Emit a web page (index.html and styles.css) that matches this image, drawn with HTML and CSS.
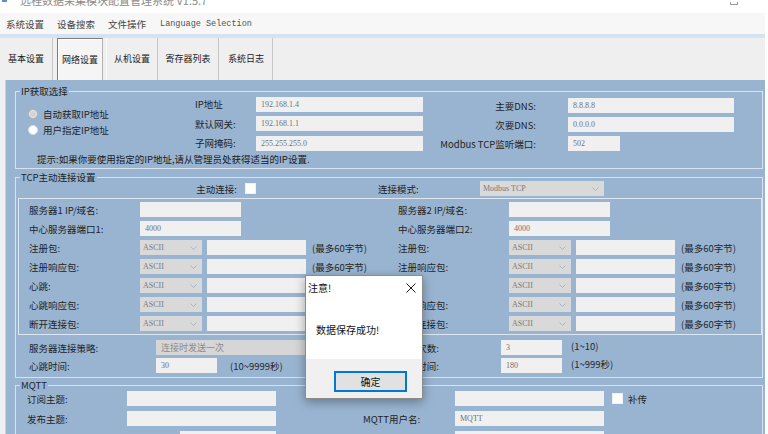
FILE: index.html
```html
<!DOCTYPE html>
<html lang="zh-CN">
<head>
<meta charset="utf-8">
<title>网络设置</title>
<link rel="stylesheet" href="styles.css">
</head>
<body>
<div class="window">
  <div class="titlebar">
    <span class="app-icon"></span>
    <span class="title">远程数据采集模块配置管理系统 V1.5.7</span>
    <span class="win-min"></span>
  </div>
  <div class="menubar">
    <span class="menu-item">系统设置</span>
    <span class="menu-item">设备搜索</span>
    <span class="menu-item">文件操作</span>
    <span class="menu-item mono">Language Selection</span>
  </div>
  <div class="tabstrip">
    <div class="tab t1">基本设置</div>
    <div class="tab t2 active">网络设置</div>
    <div class="tab t3">从机设置</div>
    <div class="tab t4">寄存器列表</div>
    <div class="tab t5">系统日志</div>
  </div>
  <div class="client">
    <div class="panel">
      <fieldset class="group ip-group">
        <legend>IP获取选择</legend>
        <div class="ip-row">
          <div class="radios">
            <div class="radio"><span class="dot on"></span>自动获取IP地址</div>
            <div class="radio"><span class="dot"></span>用户指定IP地址</div>
          </div>
          <div class="ip-fields">
            <span class="lbl">IP地址</span><input class="tb w167" readonly value="192.168.1.4">
            <span class="lbl">默认网关:</span><input class="tb w167" readonly value="192.168.1.1">
            <span class="lbl">子网掩码:</span><input class="tb w167" readonly value="255.255.255.0">
          </div>
          <div class="dns-fields">
            <span class="lbl r">主要DNS:</span><input class="tb w166" readonly value="8.8.8.8">
            <span class="lbl r">次要DNS:</span><input class="tb w166" readonly value="0.0.0.0">
            <span class="lbl r">Modbus TCP监听端口:</span><input class="tb w52" readonly value="502">
          </div>
        </div>
        <p class="hint">提示:如果你要使用指定的IP地址,请从管理员处获得适当的IP设置.</p>
      </fieldset>

      <fieldset class="group tcp-group">
        <legend>TCP主动连接设置</legend>
        <div class="conn-row">
          <span class="conn-lbl">主动连接:</span>
          <span class="check"></span>
          <span class="mode-lbl">连接模式:</span>
          <div class="combo w124"><span>Modbus TCP</span><svg width="7" height="4" viewBox="0 0 7 4"><polyline points="0.5,0.5 3.5,3.5 6.5,0.5" fill="none" stroke="#a9b6c6" stroke-width="1"/></svg></div>
        </div>
        <div class="inner">
          <span class="lbl">服务器1 IP/域名:</span>
          <div class="cell"><input class="tb w101" readonly value=""></div>
          <span class="lbl">服务器2 IP/域名:</span>
          <div class="cell"><input class="tb w101" readonly value=""></div>

          <span class="lbl">中心服务器端口1:</span>
          <div class="cell"><input class="tb w101" readonly value="4000"></div>
          <span class="lbl">中心服务器端口2:</span>
          <div class="cell"><input class="tb w101" readonly value="4000"></div>

          <span class="lbl">注册包:</span>
          <div class="cell"><div class="combo w62"><span>ASCII</span><svg width="7" height="4" viewBox="0 0 7 4"><polyline points="0.5,0.5 3.5,3.5 6.5,0.5" fill="none" stroke="#a9b6c6"/></svg></div><input class="tb w99" readonly value=""><span class="note">(最多60字节)</span></div>
          <span class="lbl">注册包:</span>
          <div class="cell"><div class="combo w62"><span>ASCII</span><svg width="7" height="4" viewBox="0 0 7 4"><polyline points="0.5,0.5 3.5,3.5 6.5,0.5" fill="none" stroke="#a9b6c6"/></svg></div><input class="tb w99" readonly value=""><span class="note">(最多60字节)</span></div>

          <span class="lbl">注册响应包:</span>
          <div class="cell"><div class="combo w62"><span>ASCII</span><svg width="7" height="4" viewBox="0 0 7 4"><polyline points="0.5,0.5 3.5,3.5 6.5,0.5" fill="none" stroke="#a9b6c6"/></svg></div><input class="tb w99" readonly value=""><span class="note">(最多60字节)</span></div>
          <span class="lbl">注册响应包:</span>
          <div class="cell"><div class="combo w62"><span>ASCII</span><svg width="7" height="4" viewBox="0 0 7 4"><polyline points="0.5,0.5 3.5,3.5 6.5,0.5" fill="none" stroke="#a9b6c6"/></svg></div><input class="tb w99" readonly value=""><span class="note">(最多60字节)</span></div>

          <span class="lbl">心跳:</span>
          <div class="cell"><div class="combo w62"><span>ASCII</span><svg width="7" height="4" viewBox="0 0 7 4"><polyline points="0.5,0.5 3.5,3.5 6.5,0.5" fill="none" stroke="#a9b6c6"/></svg></div><input class="tb w99" readonly value=""><span class="note">(最多60字节)</span></div>
          <span class="lbl">心跳:</span>
          <div class="cell"><div class="combo w62"><span>ASCII</span><svg width="7" height="4" viewBox="0 0 7 4"><polyline points="0.5,0.5 3.5,3.5 6.5,0.5" fill="none" stroke="#a9b6c6"/></svg></div><input class="tb w99" readonly value=""><span class="note">(最多60字节)</span></div>

          <span class="lbl">心跳响应包:</span>
          <div class="cell"><div class="combo w62"><span>ASCII</span><svg width="7" height="4" viewBox="0 0 7 4"><polyline points="0.5,0.5 3.5,3.5 6.5,0.5" fill="none" stroke="#a9b6c6"/></svg></div><input class="tb w99" readonly value=""><span class="note">(最多60字节)</span></div>
          <span class="lbl">心跳响应包:</span>
          <div class="cell"><div class="combo w62"><span>ASCII</span><svg width="7" height="4" viewBox="0 0 7 4"><polyline points="0.5,0.5 3.5,3.5 6.5,0.5" fill="none" stroke="#a9b6c6"/></svg></div><input class="tb w99" readonly value=""><span class="note">(最多60字节)</span></div>

          <span class="lbl">断开连接包:</span>
          <div class="cell"><div class="combo w62"><span>ASCII</span><svg width="7" height="4" viewBox="0 0 7 4"><polyline points="0.5,0.5 3.5,3.5 6.5,0.5" fill="none" stroke="#a9b6c6"/></svg></div><input class="tb w99" readonly value=""><span class="note">(最多60字节)</span></div>
          <span class="lbl">断开连接包:</span>
          <div class="cell"><div class="combo w62"><span>ASCII</span><svg width="7" height="4" viewBox="0 0 7 4"><polyline points="0.5,0.5 3.5,3.5 6.5,0.5" fill="none" stroke="#a9b6c6"/></svg></div><input class="tb w99" readonly value=""><span class="note">(最多60字节)</span></div>
        </div>
        <div class="policy">
          <span class="lbl">服务器连接策略:</span>
          <div class="cell"><div class="combo w175 cn"><span>连接时发送一次</span></div></div>
          <span class="lbl r2">重连次数:</span>
          <input class="tb w61" readonly value="3">
          <span class="note n2">(1~10)</span>

          <span class="lbl">心跳时间:</span>
          <div class="cell"><input class="tb w61" readonly value="30"><span class="note n3">(10~9999秒)</span></div>
          <span class="lbl r2">重连时间:</span>
          <input class="tb w61" readonly value="180">
          <span class="note n2">(1~999秒)</span>
        </div>
      </fieldset>

      <fieldset class="group mqtt-group">
        <legend>MQTT</legend>
        <div class="mqtt">
          <span class="lbl">订阅主题:</span>
          <input class="tb w149" readonly value="">
          <span class="lbl rl"></span>
          <input class="tb w149" readonly value="">
          <div class="cell"><span class="check"></span><span class="chk-lbl">补传</span></div>

          <span class="lbl">发布主题:</span>
          <input class="tb w149" readonly value="">
          <span class="lbl rl">MQTT用户名:</span>
          <input class="tb w149" readonly value="MQTT">
          <div class="cell"></div>

          <span class="lbl"></span>
          <div class="cell"><input class="tb w96 off53" readonly value=""></div>
          <span class="lbl rl"></span>
          <input class="tb w149" readonly value="">
          <div class="cell"></div>
        </div>
      </fieldset>
    </div>
  </div>

  <div class="dialog">
    <div class="dlg-head">
      <span class="dlg-title">注意!</span>
      <svg class="dlg-close" width="10" height="10" viewBox="0 0 10 10"><path d="M0.5 0.5 L9.5 9.5 M9.5 0.5 L0.5 9.5" stroke="#1a1a1a" stroke-width="1" fill="none"/></svg>
    </div>
    <div class="dlg-body">数据保存成功!</div>
    <div class="dlg-foot"><button class="btn">确定</button></div>
  </div>
</div>
</body>
</html>
```
FILE: styles.css
```css
* { box-sizing: border-box; }
html, body { margin: 0; padding: 0; }
body {
  width: 768px;
  height: 434px;
  overflow: hidden;
  background: #ffffff;
  font-family: "Noto Sans CJK SC", "Noto Sans", sans-serif;
  font-size: 9.5px;
  color: #1f1f1f;
}
.window { position: relative; width: 765px; height: 434px; }

/* title bar */
.titlebar { height: 13px; display: flex; overflow: hidden; background: #ffffff; }
.app-icon { flex: none; width: 5px; height: 2px; margin-left: 2px; background: #5b8fd0; }
.title { margin: -8px 0 0 13px; line-height: 16px; font-size: 11px; color: #8c8c8c; white-space: nowrap; }
.win-min { flex: none; margin: 2px 27px 0 auto; width: 8px; height: 3px; border: 1px solid #9a9a9a; border-top: none; }

/* menu */
.menubar { height: 21px; display: flex; align-items: center; background: #f7f7f7; }
.menu-item { padding: 0 6px; margin-right: 1px; color: #454545; line-height: 14px; white-space: nowrap; }
.menu-item.mono { font-family: "Liberation Mono", monospace; font-size: 8.5px; color: #505050; margin-left: 1px; }

/* tabs */
.tabstrip { height: 46px; border-top: 4px solid #d5e3f1; background: #efefef; display: flex; }
.tab { display: flex; align-items: center; justify-content: center; font-size: 9px; color: #1a1a1a; border-right: 1px solid #c6c6c6; white-space: nowrap; padding-bottom: 1px; }
.t1 { width: 53px; }
.t2 { width: 46px; margin-left: 4px; }
.t3 { width: 52px; margin-left: 3px; border-left: 1px solid #fafafa; }
.t4 { width: 61px; margin-left: 0; }
.t5 { width: 53px; margin-left: 1px; }
.tab.active { background: #f5f5f5; border-top: 1px solid #7d7d7d; border-left: 1px solid #7d7d7d; border-right: 1px solid #b5b5b5; box-shadow: inset 1px 1px 0 #ffffff; }

/* client area */
.client { display: flex; height: 354px; background: #eef0f3; }
.panel { flex: 1; margin-left: 5px; border-left: 1px solid #c3d1e0; background: #99b4d1; padding: 6px 2px 0 9px; }

.group { margin: 0; padding: 0 0 3px 4px; border: 1px solid #d7e2ee; min-width: 0; }
.group legend { padding: 0 1px; line-height: 10px; font-size: 9.5px; color: #1f1f1f; }
.tcp-group { margin-top: 3px; padding-bottom: 4px; }
.mqtt-group { margin-top: 2px; padding-top: 1px; }

.lbl { white-space: nowrap; color: #1f1f1f; line-height: 12px; }

.tb {
  display: block;
  height: 15px;
  margin: 0;
  border: 0;
  padding: 0 0 0 5px;
  background: #f0f0f0;
  font-family: "Liberation Serif", serif;
  font-size: 8px;
  color: #707070;
  outline: none;
}
.w52 { width: 52px; }
.w61 { width: 61px; }
.w96 { width: 96px; }
.w99 { width: 99px; }
.w101 { width: 101px; }
.w149 { width: 149px; }
.w166 { width: 166px; }
.w167 { width: 167px; }
.off53 { margin-left: 53px; }

.combo {
  height: 15px;
  background: #d9d9d9;
  display: flex;
  align-items: center;
  justify-content: space-between;
  padding: 0 5px 0 3px;
  font-family: "Liberation Serif", serif;
  font-size: 8px;
  color: #7a7a7a;
  flex: none;
}
.combo.cn { font-family: "Noto Sans CJK SC", sans-serif; font-size: 9px; color: #8a8a8a; background: #d6d6d6; padding-left: 5px; }
.w62 { width: 62px; }
.w124 { width: 124px; }
.w175 { width: 175px; }

.check { flex: none; width: 11px; height: 11px; background: #ffffff; border: 1px solid #eef2f7; }

/* IP group */
.ip-row { display: flex; }
.radios { width: 167px; margin-left: 8px; padding-top: 10px; }
.radio { display: flex; align-items: center; height: 16px; color: #1f1f1f; }
.dot { width: 10px; height: 10px; border-radius: 50%; background: #ffffff; border: 1px solid #d8dde4; margin-right: 5px; }
.dot.on { background: #d3d3d3; border-color: #b3b3b3; box-shadow: inset 0 0 0 1px #e6e6e6; }
.ip-fields { display: grid; grid-template-columns: 61px 167px; row-gap: 3.5px; align-items: center; }
.dns-fields { display: grid; grid-template-columns: 145px 166px; row-gap: 4px; align-items: center; margin-top: 2px; }
.lbl.r { text-align: right; padding-right: 32px; }
.hint { margin: 2px 0 0 17px; line-height: 12px; color: #1a1a1a; }

/* TCP group */
.conn-row { display: flex; align-items: center; height: 15px; margin-top: -1px; }
.conn-lbl { width: 225px; text-align: right; padding-right: 8px; }
.mode-lbl { width: 102px; margin-left: 122px; }
.inner {
  margin: 2px 0 0 -2px;
  border: 1px solid #dde7f1;
  padding: 3px 0 3px 10px;
  display: grid;
  grid-template-columns: 111px 258px 111px auto;
  row-gap: 4px;
  align-items: center;
}
.cell { display: flex; align-items: center; height: 15px; }
.cell .combo + .tb { margin-left: 5px; }
.note { margin-left: 6px; white-space: nowrap; color: #262626; line-height: 12px; }
.policy {
  margin: 5px 0 0 9px;
  display: grid;
  grid-template-columns: 127px 222px 123px 61px auto;
  row-gap: 3px;
  align-items: center;
}
.lbl.r2 { text-align: right; padding-right: 62px; }
.note.n2 { margin-left: 9px; margin-top: -4px; }
.note.n3 { margin-left: 13px; }

/* MQTT */
.mqtt {
  margin-left: 7px;
  display: grid;
  grid-template-columns: 100px 149px 179px 149px auto;
  row-gap: 5px;
  align-items: center;
}
.lbl.rl { padding-left: 87px; }
.mqtt .cell .check { margin-left: 8px; }
.chk-lbl { margin-left: 5px; color: #1f1f1f; }

/* dialog */
.dialog {
  position: absolute;
  left: 305px;
  top: 275px;
  width: 118px;
  height: 124px;
  background: #ffffff;
  border: 1px solid #8c8c8c;
  box-shadow: 0 3px 10px rgba(0, 0, 0, 0.35);
  display: flex;
  flex-direction: column;
}
.dlg-head { height: 23px; flex: none; display: flex; align-items: center; justify-content: space-between; padding: 0 6px 0 2px; }
.dlg-title { font-size: 10px; color: #111; }
.dlg-close { display: block; }
.dlg-body { flex: 1; padding: 25px 0 0 10px; font-size: 10px; line-height: 12px; color: #111; }
.dlg-foot { height: 39px; flex: none; background: #f0f0f0; display: flex; justify-content: flex-end; align-items: flex-start; padding: 12px 15px 0 0; }
.btn {
  width: 73px;
  height: 21px;
  margin: 0;
  padding: 0;
  border: 1px solid #0078d7;
  box-shadow: inset 0 0 0 1px #0078d7;
  background: #e1e1e1;
  font-family: "Noto Sans CJK SC", sans-serif;
  font-size: 10px;
  color: #111;
}
```
